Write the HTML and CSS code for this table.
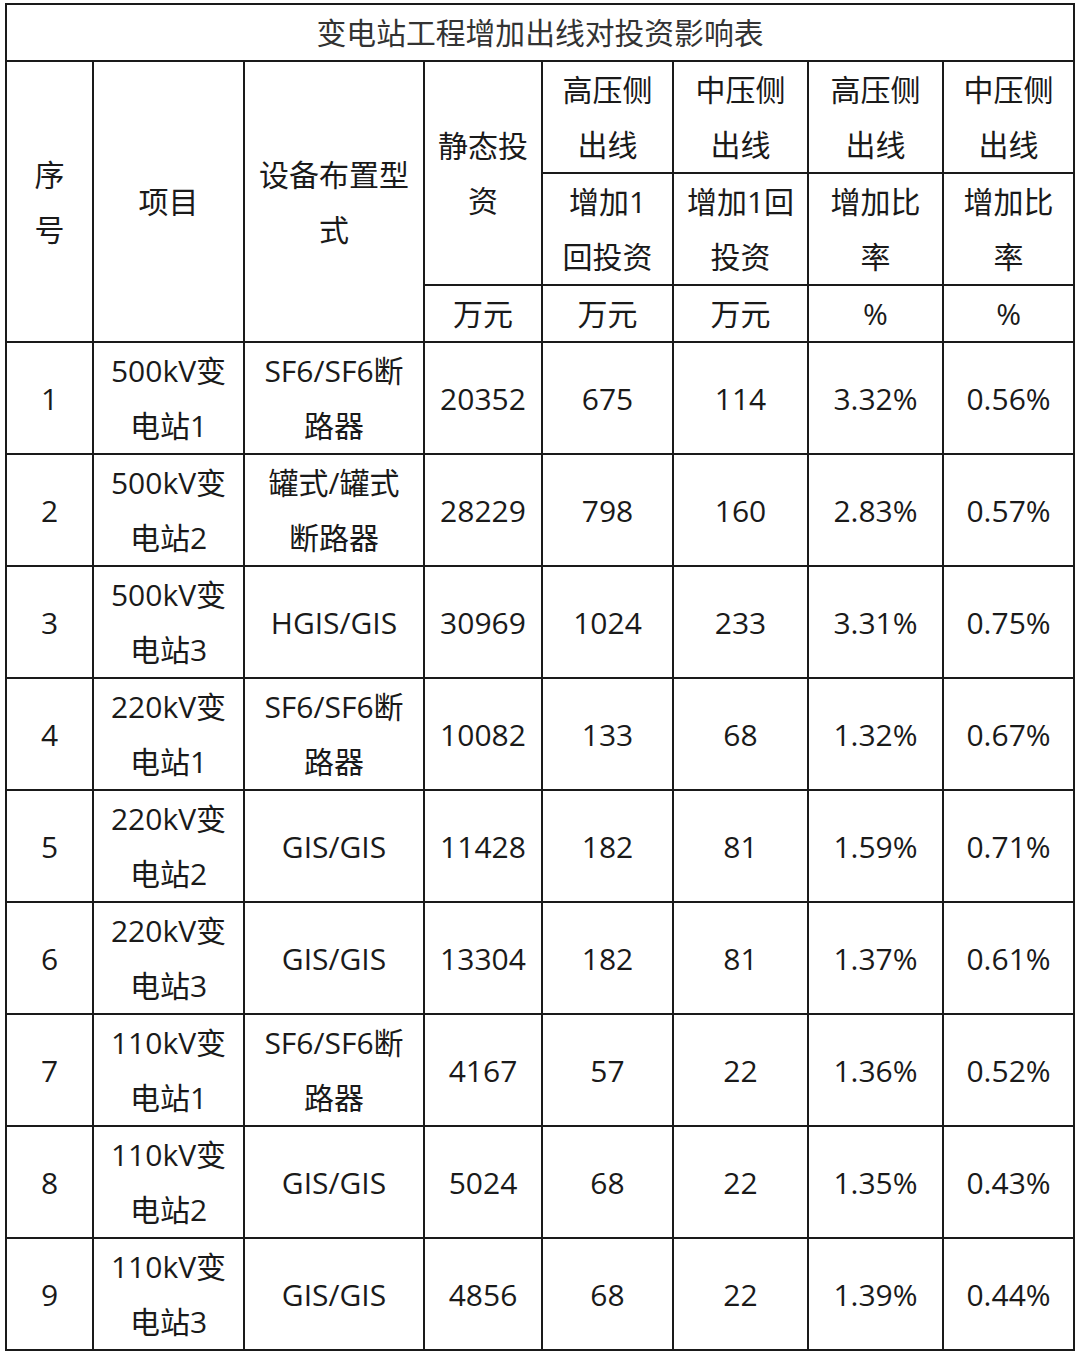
FILE: index.html
```html
<!DOCTYPE html>
<html lang="zh-CN">
<head>
<meta charset="utf-8">
<title>变电站工程增加出线对投资影响表</title>
<link rel="stylesheet" href="styles.css">
</head>
<body>
<table class="sheet">
  <colgroup>
    <col class="c-no">
    <col class="c-item">
    <col class="c-type">
    <col class="c-inv">
    <col class="c-hv">
    <col class="c-mv">
    <col class="c-hr">
    <col class="c-mr">
  </colgroup>
  <tr class="r-title"><td colspan="8" class="title">变电站工程增加出线对投资影响表</td></tr>
  <tr class="r-2">
    <td rowspan="3">序<br>号</td>
    <td rowspan="3">项目</td>
    <td rowspan="3">设备布置型<br>式</td>
    <td rowspan="2">静态投<br>资</td>
    <td>高压侧<br>出线</td>
    <td>中压侧<br>出线</td>
    <td>高压侧<br>出线</td>
    <td>中压侧<br>出线</td>
  </tr>
  <tr class="r-2">
    <td>增加1<br>回投资</td>
    <td>增加1回<br>投资</td>
    <td>增加比<br>率</td>
    <td>增加比<br>率</td>
  </tr>
  <tr class="r-1">
    <td>万元</td><td>万元</td><td>万元</td><td>%</td><td>%</td>
  </tr>
  <tr class="r-2"><td>1</td><td>500kV变<br>电站1</td><td>SF6/SF6断<br>路器</td><td>20352</td><td>675</td><td>114</td><td>3.32%</td><td>0.56%</td></tr>
  <tr class="r-2"><td>2</td><td>500kV变<br>电站2</td><td>罐式/罐式<br>断路器</td><td>28229</td><td>798</td><td>160</td><td>2.83%</td><td>0.57%</td></tr>
  <tr class="r-2"><td>3</td><td>500kV变<br>电站3</td><td>HGIS/GIS</td><td>30969</td><td>1024</td><td>233</td><td>3.31%</td><td>0.75%</td></tr>
  <tr class="r-2"><td>4</td><td>220kV变<br>电站1</td><td>SF6/SF6断<br>路器</td><td>10082</td><td>133</td><td>68</td><td>1.32%</td><td>0.67%</td></tr>
  <tr class="r-2"><td>5</td><td>220kV变<br>电站2</td><td>GIS/GIS</td><td>11428</td><td>182</td><td>81</td><td>1.59%</td><td>0.71%</td></tr>
  <tr class="r-2"><td>6</td><td>220kV变<br>电站3</td><td>GIS/GIS</td><td>13304</td><td>182</td><td>81</td><td>1.37%</td><td>0.61%</td></tr>
  <tr class="r-2"><td>7</td><td>110kV变<br>电站1</td><td>SF6/SF6断<br>路器</td><td>4167</td><td>57</td><td>22</td><td>1.36%</td><td>0.52%</td></tr>
  <tr class="r-2"><td>8</td><td>110kV变<br>电站2</td><td>GIS/GIS</td><td>5024</td><td>68</td><td>22</td><td>1.35%</td><td>0.43%</td></tr>
  <tr class="r-last"><td>9</td><td>110kV变<br>电站3</td><td>GIS/GIS</td><td>4856</td><td>68</td><td>22</td><td>1.39%</td><td>0.44%</td></tr>
</table>
</body>
</html>
```

FILE: styles.css
```css
html, body {
  margin: 0;
  padding: 0;
  background: #ffffff;
}

body {
  padding: 3px 0 0 5px;
}

.sheet {
  border-collapse: collapse;
  table-layout: fixed;
  width: 1068px;
  font-family: "Open Sans", "Noto Sans CJK SC", sans-serif;
  font-size: 30px;
  color: #1a1a1a;
}

.sheet td {
  border: 2px solid #1a1a1a;
  padding: 0;
  text-align: center;
  vertical-align: middle;
  line-height: 55px;
  white-space: nowrap;
  overflow: hidden;
}

.c-no { width: 87px; }
.c-item { width: 151px; }
.c-type { width: 180px; }
.c-inv { width: 118px; }
.c-hv { width: 131px; }
.c-mv { width: 135px; }
.c-hr { width: 135px; }
.c-mr { width: 131px; }

.r-title { height: 57px; }
.r-2 { height: 112px; }
.r-1 { height: 56px; }
.r-last { height: 110px; }

.sheet td.title {
  color: #333333;
  font-size: 29.8px;
}
```
